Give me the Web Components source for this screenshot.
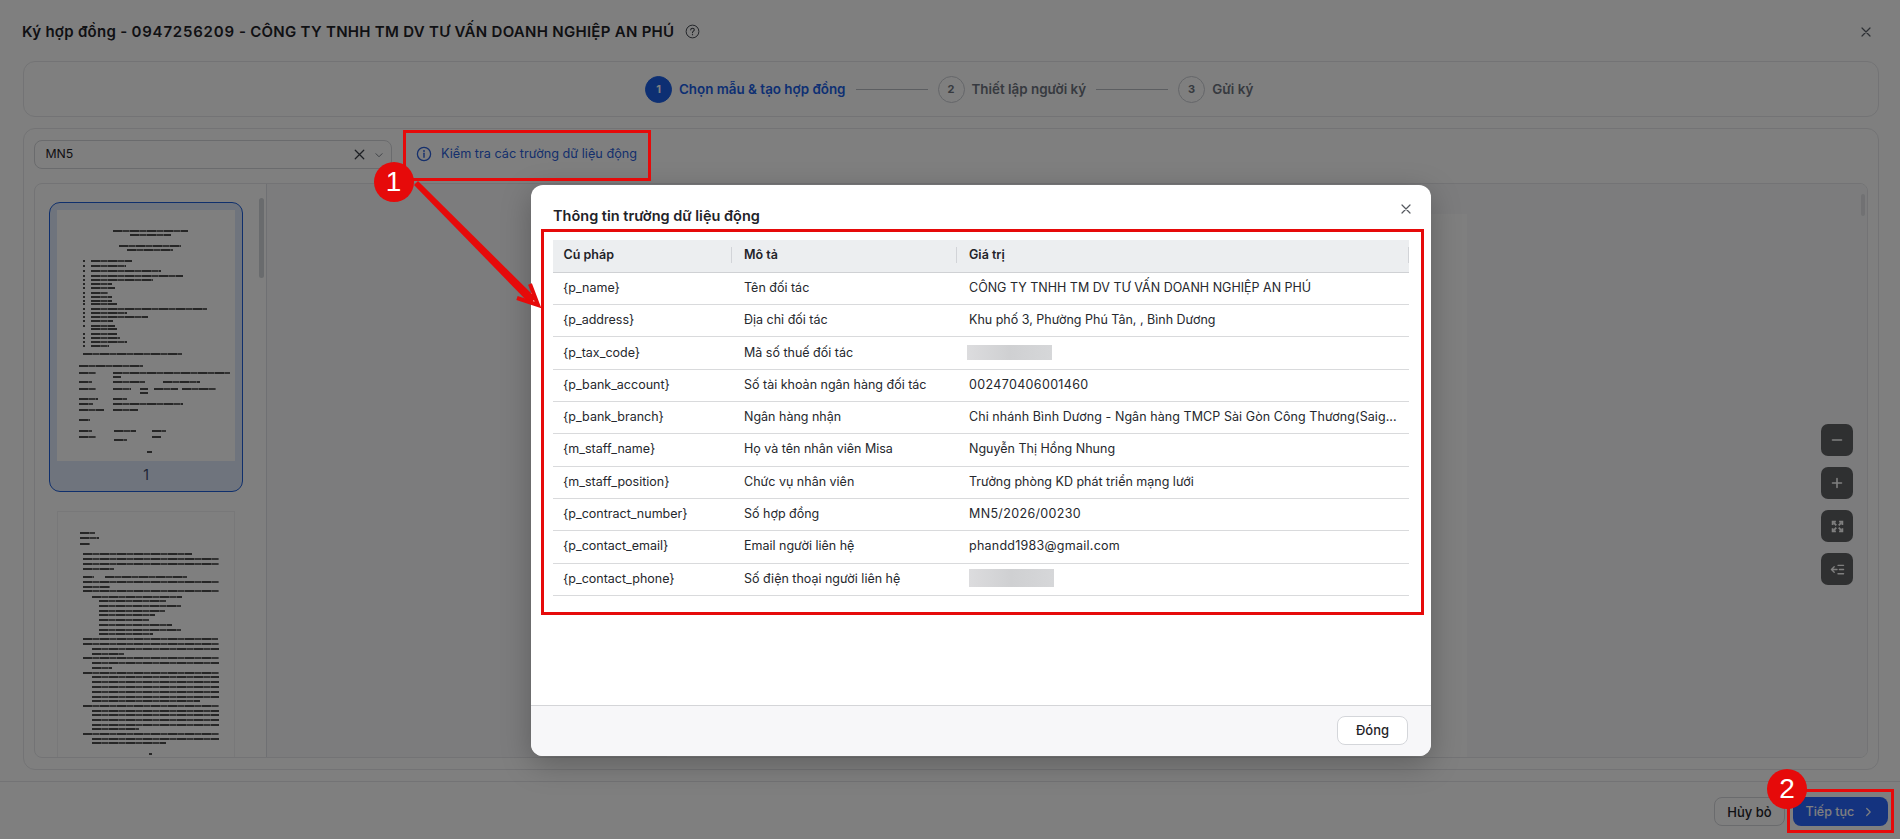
<!DOCTYPE html>
<html lang="vi">
<head>
<meta charset="utf-8">
<title>Ký hợp đồng</title>
<style>
html, body { margin: 0; padding: 0; }
body { width: 1900px; height: 839px; overflow: hidden; position: relative; background: #fff; font-family: Inter, "Noto Sans", sans-serif; color: #1f2329; }
</style>
</head>
<body>
<contract-shell>
    <step-bar></step-bar>
    <template-picker></template-picker>
    <doc-thumb slot="thumbs" kind="cover" selected number="1"></doc-thumb>
    <doc-thumb slot="thumbs" kind="terms"></doc-thumb>
    <doc-viewer slot="viewer"></doc-viewer>
</contract-shell>

<field-modal>
    <field-row name="{p_name}" label="Tên đối tác">CÔNG TY TNHH TM DV TƯ VẤN DOANH NGHIỆP AN PHÚ</field-row>
    <field-row name="{p_address}" label="Địa chỉ đối tác">Khu phố 3, Phường Phú Tân, , Bình Dương</field-row>
    <field-row name="{p_tax_code}" label="Mã số thuế đối tác"><blur-mask h="15" shift="-2"></blur-mask></field-row>
    <field-row name="{p_bank_account}" label="Số tài khoản ngân hàng đối tác"><span style="letter-spacing:.35px">002470406001460</span></field-row>
    <field-row name="{p_bank_branch}" label="Ngân hàng nhận"><span style="letter-spacing:.07px">Chi nhánh Bình Dương - Ngân hàng TMCP Sài Gòn Công Thương(Saig...</span></field-row>
    <field-row name="{m_staff_name}" label="Họ và tên nhân viên Misa">Nguyễn Thị Hồng Nhung</field-row>
    <field-row name="{m_staff_position}" label="Chức vụ nhân viên">Trưởng phòng KD phát triển mạng lưới</field-row>
    <field-row name="{p_contract_number}" label="Số hợp đồng"><span style="letter-spacing:.35px">MN5/2026/00230</span></field-row>
    <field-row name="{p_contact_email}" label="Email người liên hệ"><span style="letter-spacing:.25px">phandd1983@gmail.com</span></field-row>
    <field-row name="{p_contact_phone}" label="Số điện thoại người liên hệ"><blur-mask h="18" shift="0"></blur-mask></field-row>
</field-modal>

<mark-box x="403" y="130" w="248" h="51"></mark-box>
<mark-box x="541" y="229" w="883" h="386"></mark-box>
<mark-box x="1787" y="789" w="107" h="44"></mark-box>
<mark-arrow></mark-arrow>
<mark-badge x="393.5" y="182">1</mark-badge>
<mark-badge x="1787" y="789">2</mark-badge>

<script>
const icons = {
    close: '<path d="M4 4l8 8M12 4l-8 8" fill="none" stroke="currentColor" stroke-width="1.2" stroke-linecap="round"/>',
    chevronDown: '<path d="M4.5 6.5L8 10l3.5-3.5" fill="none" stroke="currentColor" stroke-width="1.1" stroke-linecap="round" stroke-linejoin="round"/>',
    chevronRight: '<path d="M6.5 4L10.5 8l-4 4" fill="none" stroke="currentColor" stroke-width="1.4" stroke-linecap="round" stroke-linejoin="round"/>',
    info: '<circle cx="8" cy="8" r="6.6" fill="none" stroke="currentColor" stroke-width="1.3"/><path d="M8 7.3v3.9" stroke="currentColor" stroke-width="1.4" stroke-linecap="round"/><circle cx="8" cy="5" r=".9" fill="currentColor"/>',
    help: '<circle cx="8" cy="8" r="6.8" fill="none" stroke="currentColor" stroke-width="1"/><path d="M6.1 6.3C6.2 5.1 7 4.5 8 4.5c1.1 0 1.9.7 1.9 1.7 0 1.5-1.9 1.500-1.9 3.1" fill="none" stroke="currentColor" stroke-width="1.1" stroke-linecap="round"/><circle cx="8" cy="11.4" r=".7" fill="currentColor"/>',
    minus: '<path d="M3.5 8h9" stroke="currentColor" stroke-width="1.6" stroke-linecap="round"/>',
    plus: '<path d="M3.5 8h9M8 3.5v9" stroke="currentColor" stroke-width="1.6" stroke-linecap="round"/>',
    expand: '<g fill="none" stroke="currentColor" stroke-width="2.2"><path d="M6.5 6.5L3 3M9.500 6.500L13 3M6.500 9.500L3 13M9.500 9.500L13 13"/><path d="M2 6V2h4M10 2h4v4M2 10v4h4M10 14h4v-4"/></g>',
    outdent: '<g fill="none" stroke="currentColor" stroke-width="1.4" stroke-linecap="round" stroke-linejoin="round"><path d="M8.500 3.500h6M10 8h4.500M8.500 12.500h6M1.500 8h6M4.500 5L1.500 8l3 3"/></g>'
}

function icon(name, size) {
    return `<svg width="${size}" height="${size}" viewBox="0 0 16 16" aria-hidden="true" style="display:block;flex:none">${icons[name]}</svg>`
}

class ContractShell extends HTMLElement {
    constructor() {
        super()
        this.attachShadow({ mode: 'open' })
    }

    connectedCallback() {
        this.shadowRoot.innerHTML = /*html*/ `
        <style>
        :host { display: flex; flex-direction: column; width: 1900px; height: 839px; box-sizing: border-box; }
        * { box-sizing: border-box; }
        header { height: 61px; padding: 2px 26px 0 22px; display: flex; align-items: center; flex: none; }
        h1 { margin: 0; font-size: 15px; font-weight: 600; color: #1f2329; letter-spacing: .28px; white-space: nowrap; }
        h1 span { letter-spacing: .8px; }
        .help { margin-left: 11px; color: #3a3f47; }
        .close { margin-left: auto; color: #5b6068; }
        .card { margin: 0 21px 0 23px; border: 1px solid #e6e7ea; border-radius: 12px; }
        .main { margin-top: 11px; height: 642px; padding: 11px 10px 11px 10px; display: flex; flex-direction: column; flex: none; }
        .toolbar { height: 29px; display: flex; align-items: center; flex: none; }
        .work { margin-top: 14px; flex: 1; min-height: 0; display: flex; border: 1px solid #e6e7ea; border-radius: 8px; overflow: hidden; }
        .thumbs { width: 232px; flex: none; border-right: 1px solid #dfe1e6; padding: 18px 0 0 14px; display: flex; flex-direction: column; gap: 11.5px; overflow: hidden; position: relative; }
        .bar { position: absolute; top: 14px; right: 2px; width: 5px; height: 80px; border-radius: 3px; background: #d3d6da; }
        footer { margin-top: 11px; flex: 1; border-top: 1px solid #e6e7ea; display: flex; align-items: flex-start; justify-content: flex-end; gap: 8px; padding: 15px 12px 0 0; }
        button { height: 29px; font: 500 13px Inter, sans-serif; border-radius: 8px; display: flex; align-items: center; justify-content: center; padding: 0; }
        .cancel { width: 71px; background: #fff; border: 1px solid #d4d6da; color: #1f2329; }
        .next { width: 95px; background: #2866ff; border: 0; color: #fff; gap: 7px; font-size: 12.5px; justify-content: flex-start; padding-left: 12.5px; }
        </style>
        <header>
            <h1>Ký hợp đồng - <span>0947256209</span> - CÔNG TY TNHH TM DV TƯ VẤN DOANH NGHIỆP AN PHÚ</h1>
            <span class="help">${icon('help', 15)}</span>
            <span class="close">${icon('close', 16)}</span>
        </header>
        <div class="card"><slot></slot></div>
        <div class="card main">
            <div class="toolbar"><slot name="tools"></slot></div>
            <div class="work">
                <div class="thumbs"><slot name="thumbs"></slot><div class="bar"></div></div>
                <slot name="viewer"></slot>
            </div>
        </div>
        <footer>
            <button class="cancel">Hủy bỏ</button>
            <button class="next">Tiếp tục ${icon('chevronRight', 14)}</button>
        </footer>
        `
        // the picker belongs in the toolbar row, the step bar stays in the first card
        const picker = this.querySelector('template-picker')
        if (picker) picker.slot = 'tools'
    }
}

class StepBar extends HTMLElement {
    constructor() {
        super()
        this.attachShadow({ mode: 'open' })
    }

    connectedCallback() {
        this.shadowRoot.innerHTML = /*html*/ `
        <style>
        :host { display: flex; align-items: center; justify-content: flex-start; height: 54px; padding-left: 621px; font-size: 13.4px; font-weight: 600; color: #6e7480; }
        .num { width: 25px; height: 25px; border-radius: 50%; border: 1px solid #c9ccd2; display: flex; align-items: center; justify-content: center; font-size: 11px; font-weight: 700; flex: none; }
        .label { margin-left: 7px; white-space: nowrap; }
        .on .num { background: #1b5fe6; border-color: #1b5fe6; color: #fff; }
        .on .label { color: #1b5fe6; }
        .step { display: flex; align-items: center; }
        .line { width: 72px; height: 1px; background: #b9bcc2; margin: 0 10px; flex: none; }
        </style>
        <div class="step on"><span class="num">1</span><span class="label">Chọn mẫu &amp; tạo hợp đồng</span></div>
        <span class="line"></span>
        <div class="step"><span class="num">2</span><span class="label">Thiết lập người ký</span></div>
        <span class="line"></span>
        <div class="step"><span class="num">3</span><span class="label">Gửi ký</span></div>
        `
    }
}

class TemplatePicker extends HTMLElement {
    constructor() {
        super()
        this.attachShadow({ mode: 'open' })
    }

    connectedCallback() {
        this.shadowRoot.innerHTML = /*html*/ `
        <style>
        :host { display: flex; align-items: center; font-size: 12.7px; }
        .select { width: 358px; height: 29px; box-sizing: border-box; border: 1px solid #d4d6da; border-radius: 8px; display: flex; align-items: center; padding: 0 5px 0 10.5px; color: #1f2329; }
        .select span { flex: 1; font-size: 12.3px; padding-bottom: 2px; }
        .x { color: #3a3f47; margin-right: 4px; }
        .chev { color: #7a7f88; }
        .link { margin-left: 24px; display: flex; align-items: center; gap: 9px; color: #2b5fd9; white-space: nowrap; padding-bottom: 2px; }
        </style>
        <div class="select"><span>MN5</span><i class="x">${icon('close', 17)}</i><i class="chev">${icon('chevronDown', 14)}</i></div>
        <div class="link">${icon('info', 16)}Kiểm tra các trường dữ liệu động</div>
        `
    }
}

// thumbnails of the contract pages: lines measured from the picture, [y, [x1, x2], ...]
const thumbPages = {
    cover: {
        sx: 3, sy: 3, ox: 170, oy: 90, height: 251,
        rows: [[150,[340,565]],[162,[390,515]],[196,[358,545]],[210,[382,520]],[241,[248,254],[272,395]],[257,[248,254],[272,378]],[272,[248,254],[272,482]],[286,[248,254],[272,548]],[299,[248,254],[272,460]],[311,[248,254],[272,335]],[324,[248,254],[272,345]],[337,[248,254],[272,325]],[349,[248,254],[272,335]],[361,[248,254],[272,335]],[372,[248,254],[272,350]],[385,[248,254],[272,620]],[398,[248,254],[272,380]],[410,[248,254],[272,445]],[423,[248,254],[272,340]],[436,[248,254],[272,345]],[447,[272,350]],[461,[248,254],[272,350]],[473,[248,254],[272,360]],[484,[248,254],[272,382]],[496,[248,254],[272,328]],[521,[248,545]],[557,[238,430]],[577,[238,290],[340,690]],[590,[340,365]],[606,[238,278],[340,435],[490,600]],[625,[238,288],[340,395],[420,445],[462,535],[548,650]],[638,[420,445]],[655,[238,295],[340,382]],[670,[238,280],[340,550]],[688,[238,312],[340,415]],[718,[238,272]],[753,[238,278],[342,410],[458,498]],[770,[238,290],[458,485]],[778,[342,382]],[815,[440,455]]]
    },
    terms: {
        sx: 2.904, sy: 3, ox: 165, oy: 40, height: 260,
        rows: [[99,[230,275]],[115,[230,285]],[133,[230,260]],[163,[238,555]],[179,[238,634]],[194,[238,634]],[209,[238,328]],[232,[238,272],[302,540]],[248,[238,634]],[263,[238,318]],[275,[240,634]],[292,[265,528]],[304,[285,480]],[319,[285,525]],[334,[285,476]],[347,[285,447]],[361,[285,430]],[377,[285,497]],[390,[285,525]],[404,[285,442]],[419,[240,630]],[434,[240,634]],[448,[265,634]],[463,[265,358]],[476,[240,634]],[490,[265,634]],[506,[265,322]],[519,[240,634]],[533,[265,634]],[548,[265,634]],[562,[265,634]],[576,[265,634]],[591,[265,634]],[605,[265,580]],[618,[240,634]],[633,[265,634]],[647,[265,634]],[661,[265,634]],[676,[265,634]],[689,[265,402]],[704,[240,634]],[718,[265,634]],[732,[265,480]],[763,[432,440]]]
    }
}

class DocThumb extends HTMLElement {
    constructor() {
        super()
        this.attachShadow({ mode: 'open' })
    }

    connectedCallback() {
        const page = thumbPages[this.getAttribute('kind')]
        const top = page.rows[0][0]
        let html = `<div style="height:${(top - page.oy) / page.sy}px"></div>`
        page.rows.forEach((row, i) => {
            const next = page.rows[i + 1]
            const h = next ? (next[0] - row[0]) / page.sy : 3
            let x = 0
            let segs = ''
            row.slice(1).forEach(([a, b]) => {
                const left = (a - page.ox) / page.sx
                const right = (b - page.ox) / page.sx
                segs += `<i style="margin-left:${left - x}px;width:${right - left}px"></i>`
                x = right
            })
            html += `<div class="row" style="height:${h}px">${segs}</div>`
        })
        const num = this.getAttribute('number')
        this.shadowRoot.innerHTML = /*html*/ `
        <style>
        :host { display: block; width: 194px; flex: none; }
        .frame { box-sizing: border-box; width: 194px; padding: 6.5px 6.5px 0 6.5px; border: 1.5px solid transparent; border-radius: 11px; }
        :host([selected]) .frame { height: 290px; background: #dfe9fb; border-color: #1f5fd8; }
        .page { width: 178px; height: ${page.height}px; background: #fff; overflow: hidden; filter: blur(.4px); }
        :host(:not([selected])) .page { border: 1px solid #f0f1f3; box-sizing: border-box; }
        .row { display: flex; }
        i { display: block; height: 2px; background: repeating-linear-gradient(90deg, #000 0 9px, #666 9px 10px, #222 10px 16px, #777 16px 17px); opacity: .7; flex: none; }
        .num { text-align: center; font-size: 14px; line-height: 28px; color: #3a4a6a; }
        </style>
        <div class="frame">
            <div class="page">${html}</div>
            ${num ? `<div class="num">${num}</div>` : ''}
        </div>
        `
    }
}

class DocViewer extends HTMLElement {
    constructor() {
        super()
        this.attachShadow({ mode: 'open' })
    }

    connectedCallback() {
        this.shadowRoot.innerHTML = /*html*/ `
        <style>
        :host { display: block; flex: 1; min-width: 0; position: relative; background: #f8f9fb; overflow: hidden; }
        .page { box-sizing: border-box; width: 800px; height: 700px; margin: 30px auto 0; background: #fff; padding: 543px 0 0 105px; display: flex; gap: 28px; align-items: flex-start; }
        .page i { display: block; height: 3px; background: repeating-linear-gradient(90deg, #000 0 4px, #444 4px 5px, #111 5px 7px, #aaa 7px 8px); }
        .tools { position: absolute; top: 240px; right: 14px; display: flex; flex-direction: column; gap: 11px; }
        .tools div { width: 32px; height: 32px; border-radius: 7px; background: #5f6062; display: flex; align-items: center; justify-content: center; color: #fff; }
        .scroll { position: absolute; top: 10px; right: 2px; width: 4px; height: 22px; background: #e2e3e6; border-radius: 2px; }
        </style>
        <div class="page"><i style="width:6px"></i><i style="width:119px"></i></div>
        <div class="scroll"></div>
        <div class="tools">
            <div>${icon('minus', 16)}</div>
            <div>${icon('plus', 16)}</div>
            <div>${icon('expand', 13)}</div>
            <div>${icon('outdent', 15)}</div>
        </div>
        `
    }
}

class FieldModal extends HTMLElement {
    constructor() {
        super()
        this.attachShadow({ mode: 'open' })
    }

    connectedCallback() {
        this.shadowRoot.innerHTML = /*html*/ `
        <style>
        :host { position: absolute; inset: 0; background: rgba(0, 0, 0, .5); display: block; }
        * { box-sizing: border-box; }
        .modal { position: absolute; left: 531px; top: 185px; width: 900px; height: 571px; background: #fff; border-radius: 12px; box-shadow: 0 8px 30px rgba(0, 0, 0, .25); display: flex; flex-direction: column; overflow: hidden; }
        .head { height: 55px; flex: none; padding: 21px 17px 0 22px; display: flex; align-items: flex-start; justify-content: space-between; }
        h2 { margin: 0; font-size: 14.5px; line-height: 20px; font-weight: 600; color: #1f2329; }
        .close { color: #55595f; margin-top: -5px; }
        .body { flex: 1; padding: 0 22px; }
        .thead { display: grid; grid-template-columns: 178.5px 225px 452.5px; height: 32.7px; background: #eceef0; border-bottom: 1px solid #cfd1d4; font-size: 12.5px; font-weight: 600; color: #1f2329; align-items: center; padding-bottom: 1px; }
        .thead span { padding-left: 12.5px; border-right: 1px solid #d2d4d8; line-height: 16px; }
        .thead span:first-child { padding-left: 10.5px; }
        .foot { height: 51px; flex: none; border-top: 1px solid #d4d5d8; background: #f7f7f9; display: flex; align-items: center; justify-content: flex-end; padding: 0 23px 2px 0; }
        button { width: 71px; height: 29px; background: #fff; border: 1px solid #d4d6da; border-radius: 8px; font: 500 13px Inter, sans-serif; color: #1f2329; padding: 0; }
        </style>
        <div class="modal">
            <div class="head"><h2>Thông tin trường dữ liệu động</h2><span class="close">${icon('close', 16)}</span></div>
            <div class="body">
                <div class="thead"><span>Cú pháp</span><span>Mô tả</span><span>Giá trị</span></div>
                <slot></slot>
            </div>
            <div class="foot"><button>Đóng</button></div>
        </div>
        `
    }
}

class FieldRow extends HTMLElement {
    constructor() {
        super()
        this.attachShadow({ mode: 'open' })
    }

    connectedCallback() {
        this.shadowRoot.innerHTML = /*html*/ `
        <style>
        :host { display: grid; grid-template-columns: 178.5px 225px 452.5px; height: 32.33px; box-sizing: border-box; border-bottom: 1px solid #d9dadc; font-size: 12.5px; color: #25282d; align-items: center; white-space: nowrap; padding-bottom: 2px; }
        div { padding-left: 12.5px; }
        div:first-of-type { padding-left: 10px; }
        </style>
        <div>${this.getAttribute('name')}</div>
        <div>${this.getAttribute('label')}</div>
        <div><slot></slot></div>
        `
    }
}

class BlurMask extends HTMLElement {
    constructor() {
        super()
        this.attachShadow({ mode: 'open' })
    }

    connectedCallback() {
        this.shadowRoot.innerHTML = `<style>
        :host { display: block; width: 85px; height: ${this.getAttribute('h')}px; margin-left: ${this.getAttribute('shift')}px; background: linear-gradient(90deg, #dcdcde, #cfd0d2 50%, #d6d7d9); }
        </style>`
    }
}

class MarkBox extends HTMLElement {
    constructor() {
        super()
        this.attachShadow({ mode: 'open' })
    }

    connectedCallback() {
        const a = (k) => this.getAttribute(k)
        this.shadowRoot.innerHTML = `<style>
        :host { position: absolute; left: ${a('x')}px; top: ${a('y')}px; width: ${a('w')}px; height: ${a('h')}px; box-sizing: border-box; border: 3px solid #e60a0a; pointer-events: none; }
        </style>`
    }
}

class MarkBadge extends HTMLElement {
    constructor() {
        super()
        this.attachShadow({ mode: 'open' })
    }

    connectedCallback() {
        const x = this.getAttribute('x') - 20
        const y = this.getAttribute('y') - 20
        this.shadowRoot.innerHTML = `<style>
        :host { position: absolute; left: ${x}px; top: ${y}px; width: 40px; height: 40px; border-radius: 50%; background: #e60a0a; color: #fff; font: 28px/40px "Liberation Sans", sans-serif; text-align: center; }
        </style><slot></slot>`
    }
}

class MarkArrow extends HTMLElement {
    constructor() {
        super()
        this.attachShadow({ mode: 'open' })
    }

    connectedCallback() {
        this.shadowRoot.innerHTML = `<style>
        :host { position: absolute; left: 400px; top: 170px; width: 150px; height: 150px; }
        svg { display: block; }
        </style>
        <svg width="150" height="150" viewBox="0 0 150 150">
            <polygon points="18,11 14,15 130,134 136,128" fill="#e60a0a"/>
            <path d="M117 128L138 135L130 114" fill="none" stroke="#e60a0a" stroke-width="4"/>
        </svg>`
    }
}

customElements.define('contract-shell', ContractShell)
customElements.define('step-bar', StepBar)
customElements.define('template-picker', TemplatePicker)
customElements.define('doc-thumb', DocThumb)
customElements.define('doc-viewer', DocViewer)
customElements.define('field-modal', FieldModal)
customElements.define('field-row', FieldRow)
customElements.define('blur-mask', BlurMask)
customElements.define('mark-box', MarkBox)
customElements.define('mark-badge', MarkBadge)
customElements.define('mark-arrow', MarkArrow)
</script>
</body>
</html>
